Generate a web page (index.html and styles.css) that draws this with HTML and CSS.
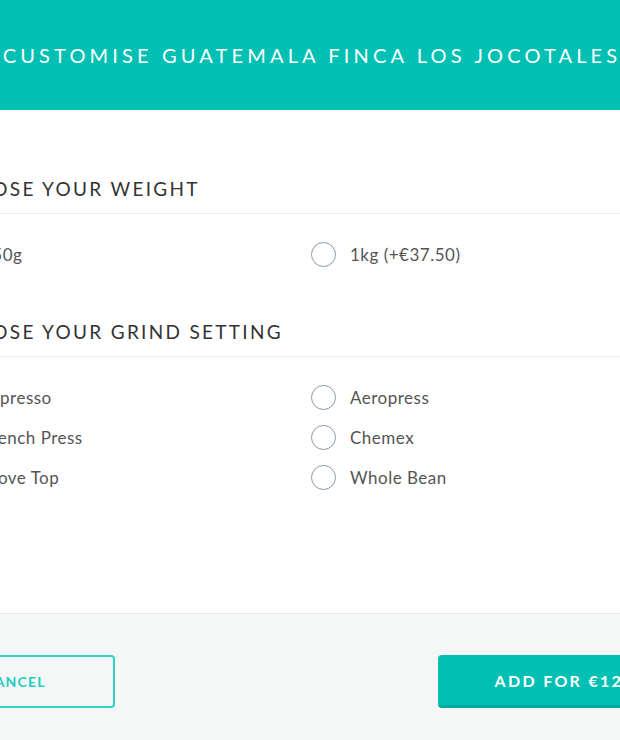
FILE: index.html
```html
<!DOCTYPE html>
<html lang="en">
<head>
    <meta charset="UTF-8">
    <meta name="viewport" content="width=device-width, initial-scale=1.0">
    <title>Customise Guatemala Finca Los Jocotales</title>
    <link rel="stylesheet" href="styles.css">
</head>
<body>
    <div class="modal">
        <header class="modal-header">
            <h1>Customise Guatemala Finca Los Jocotales</h1>
        </header>

        <div class="modal-body">
            <section class="option-group">
                <h2>Choose your weight</h2>
                <div class="options">
                    <label class="option"><input type="radio" name="weight" value="250g"><span>250g</span></label>
                    <label class="option"><input type="radio" name="weight" value="1kg"><span>1kg (+€37.50)</span></label>
                </div>
            </section>

            <section class="option-group">
                <h2>Choose your grind setting</h2>
                <div class="options">
                    <label class="option"><input type="radio" name="grind" value="espresso"><span>Espresso</span></label>
                    <label class="option"><input type="radio" name="grind" value="aeropress"><span>Aeropress</span></label>
                    <label class="option"><input type="radio" name="grind" value="french-press"><span>French Press</span></label>
                    <label class="option"><input type="radio" name="grind" value="chemex"><span>Chemex</span></label>
                    <label class="option"><input type="radio" name="grind" value="stove-top"><span>Stove Top</span></label>
                    <label class="option"><input type="radio" name="grind" value="whole-bean"><span>Whole Bean</span></label>
                </div>
            </section>
        </div>

        <footer class="modal-footer">
            <button class="btn btn-cancel">Cancel</button>
            <button class="btn btn-add">Add for €12.50</button>
        </footer>
    </div>
</body>
</html>
```

FILE: styles.css
```css
body {
    margin: 0;
    font-family: Lato, "Open Sans", sans-serif;
    background: #fff;
    overflow: hidden;
}
.modal {
    width: 844px;
    margin-left: -112px;
    background: #fff;
}
.modal-header {
    background-color: #00bfb3;
    height: 110px;
    display: flex;
    align-items: center;
    justify-content: center;
}
.modal-header h1 {
    margin: 0 0 0 4px;
    color: #fff;
    font-size: 20px;
    font-weight: 400;
    letter-spacing: 4.15px;
    text-transform: uppercase;
    white-space: nowrap;
}
.modal-body {
    padding: 66px 0 116px 55px;
    display: flex;
    flex-direction: column;
    gap: 45px;
}
.option-group h2 {
    margin: 0;
    padding: 1px 0 12px;
    border-bottom: 1px solid #e8eef1;
    font-size: 19px;
    line-height: 24px;
    font-weight: 400;
    color: #333;
    letter-spacing: 2.3px;
    text-transform: uppercase;
}
.options {
    display: grid;
    grid-template-columns: 368px 368px;
    grid-auto-rows: 40px;
    padding-top: 20px;
}
.option {
    display: flex;
    align-items: center;
    gap: 14px;
    font-size: 17px;
    letter-spacing: 0.5px;
    color: #555;
    cursor: pointer;
}
.option input {
    appearance: none;
    margin: 0;
    width: 25px;
    height: 25px;
    border: 1.5px solid #8c9aa6;
    border-radius: 50%;
    background: #fff;
}
.modal-footer {
    background-color: #f5f7f7;
    border-top: 1px solid #e6ecee;
    padding: 41px 23px 40px 27px;
    display: flex;
    justify-content: space-between;
}
.btn {
    height: 53px;
    border-radius: 4px;
    font-family: inherit;
    font-weight: 700;
    text-transform: uppercase;
    cursor: pointer;
}
.btn-cancel {
    width: 200px;
    background: transparent;
    border: 2px solid #2fd3c7;
    color: #1ccdc1;
    font-size: 14px;
    letter-spacing: 1.2px;
}
.btn-add {
    width: 271px;
    background-color: #00bfb3;
    border: none;
    border-bottom: 3px solid #00a99e;
    color: #fff;
    font-size: 16px;
    letter-spacing: 2.3px;
}
```
